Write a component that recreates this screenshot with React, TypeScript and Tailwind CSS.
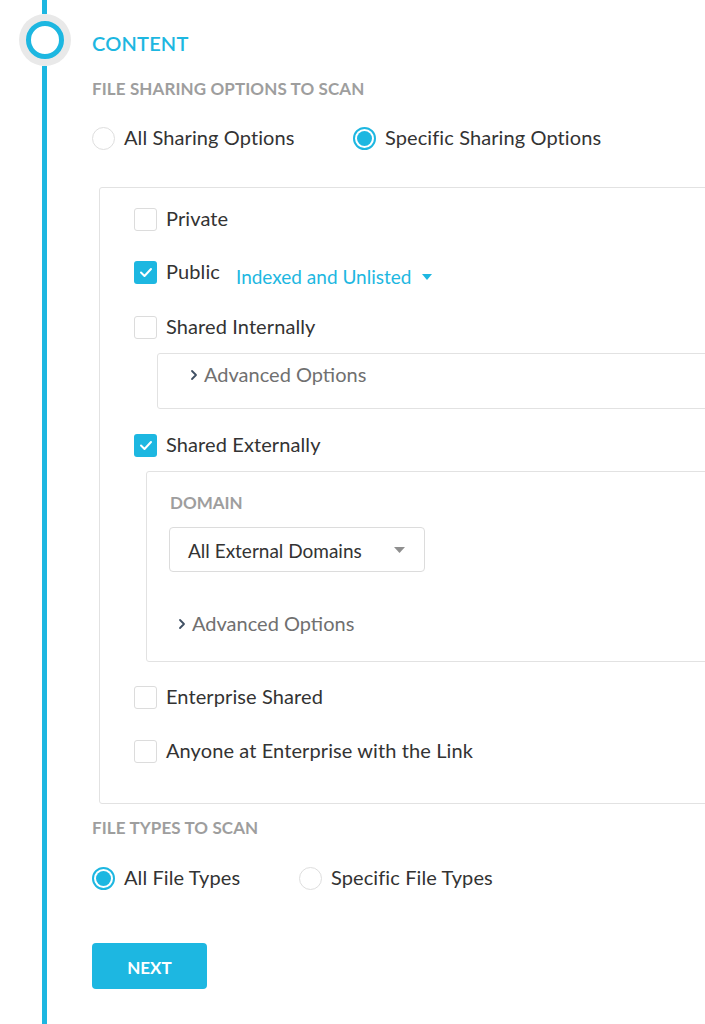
import React from "react";

const BLUE = "#1db7e1";

function Checkbox({ checked }: { checked?: boolean }) {
  if (checked) {
    return (
      <div className="w-[23px] h-[23px] rounded-[3px] bg-[#1db7e1] flex items-center justify-center shrink-0">
        <svg width="14" height="11" viewBox="0 0 14 11" fill="none">
          <path d="M2 5.5 L5.5 9 L12 2" stroke="white" strokeWidth="2" strokeLinecap="round" strokeLinejoin="round" />
        </svg>
      </div>
    );
  }
  return <div className="w-[23px] h-[23px] rounded-[3px] border border-[#dcdcdc] bg-white shrink-0" />;
}

function Radio({ checked }: { checked?: boolean }) {
  if (checked) {
    return (
      <div className="w-[23px] h-[23px] rounded-full border-2 border-[#1db7e1] flex items-center justify-center shrink-0">
        <div className="w-[15px] h-[15px] rounded-full bg-[#1db7e1]" />
      </div>
    );
  }
  return <div className="w-[23px] h-[23px] rounded-full border-[1.5px] border-[#dedede] bg-white shrink-0" />;
}

function CheckRow({ checked, label, className = "", children }: { checked?: boolean; label: string; className?: string; children?: React.ReactNode }) {
  return (
    <div className={`flex items-center h-[30px] ${className}`}>
      <Checkbox checked={checked} />
      <span className="ml-[9px] mb-[2px] text-[20px] tracking-[0.1px] text-[#333333]">{label}</span>
      {children}
    </div>
  );
}

function Chevron() {
  return (
    <svg width="8" height="12" viewBox="0 0 8 12" fill="none" className="shrink-0">
      <path d="M2 2 L6 6 L2 10" stroke="#3f4f63" strokeWidth="1.8" strokeLinecap="round" strokeLinejoin="round" />
    </svg>
  );
}

function AdvancedOptions() {
  return (
    <div className="flex items-center h-[30px]">
      <Chevron />
      <span className="ml-[6px] mb-[2px] text-[20px] text-[#707070]">Advanced Options</span>
    </div>
  );
}

export default function App() {
  return (
    <div
      className="w-[705px] h-[1024px] overflow-hidden bg-white flex"
      style={{ fontFamily: "Lato, 'Open Sans', sans-serif" }}
    >
      {/* rail */}
      <div className="w-[89px] shrink-0 flex flex-col items-center">
        <div className="w-[5px] h-[14px] bg-[#1db7e1]" />
        <div className="w-[52px] h-[52px] rounded-full bg-[#e9e9e9] flex items-center justify-center shrink-0">
          <div className="w-[38px] h-[38px] rounded-full border-[5px] border-[#1db7e1] bg-white" />
        </div>
        <div className="w-[5px] flex-1 bg-[#1db7e1]" />
      </div>

      {/* content */}
      <div className="flex-1 pl-[3px] pt-[31px] flex flex-col">
        <div className="text-[20px] leading-[24px] font-semibold text-[#1db7e1] tracking-[0.2px]">CONTENT</div>

        <div className="mt-[24px] text-[17px] leading-[20px] font-bold text-[#9e9e9e] tracking-[0.1px]">FILE SHARING OPTIONS TO SCAN</div>

        <div className="mt-[24px] flex items-center h-[30px]">
          <div className="flex items-center w-[261px]">
            <Radio />
            <span className="ml-[9px] mb-[2px] text-[20px] tracking-[0.1px] text-[#333333]">All Sharing Options</span>
          </div>
          <div className="flex items-center">
            <Radio checked />
            <span className="ml-[9px] mb-[2px] text-[20px] tracking-[0.1px] text-[#333333]">Specific Sharing Options</span>
          </div>
        </div>

        {/* sharing box */}
        <div className="mt-[34px] ml-[7px] w-[640px] border border-[#e2e2e2] rounded-[3px] pl-[34px] pt-[16px] pb-[37px] flex flex-col">
          <CheckRow label="Private" />
          <CheckRow checked label="Public" className="mt-[23px]">
            <span className="ml-[16px] mt-[10px] text-[19px] text-[#1db7e1] flex items-center">
              Indexed and Unlisted
              <svg width="10" height="6" viewBox="0 0 10 6" className="ml-[11px]">
                <path d="M0 0 L10 0 L5 6 Z" fill={BLUE} />
              </svg>
            </span>
          </CheckRow>
          <CheckRow label="Shared Internally" className="mt-[25px]" />

          <div className="mt-[11px] ml-[23px] border border-[#e2e2e2] rounded-[3px] pl-[32px] pt-[6px] pb-[18px]">
            <AdvancedOptions />
          </div>

          <CheckRow checked label="Shared Externally" className="mt-[21px]" />

          <div className="mt-[11px] ml-[12px] border border-[#e2e2e2] rounded-[3px] pt-[21px] pb-[22px] flex flex-col">
            <div className="pl-[23px] text-[17px] leading-[20px] font-bold text-[#9e9e9e]">DOMAIN</div>
            <div className="mt-[14px] ml-[22px] w-[256px] h-[45px] border border-[#dcdcdc] rounded-[4px] flex items-center justify-between pl-[18px] pr-[19px]">
              <span className="mt-[3px] text-[19px] text-[#333333]">All External Domains</span>
              <svg width="11" height="6" viewBox="0 0 11 6">
                <path d="M0 0 L11 0 L5.5 6 Z" fill="#8f8f8f" />
              </svg>
            </div>
            <div className="mt-[37px] ml-[31px]">
              <AdvancedOptions />
            </div>
          </div>

          <CheckRow label="Enterprise Shared" className="mt-[20px]" />
          <CheckRow label="Anyone at Enterprise with the Link" className="mt-[24px]" />
        </div>

        <div className="mt-[14px] text-[17px] leading-[20px] font-bold text-[#9e9e9e] tracking-[0.1px]">FILE TYPES TO SCAN</div>

        <div className="mt-[25px] flex items-center h-[30px]">
          <div className="flex items-center w-[207px]">
            <Radio checked />
            <span className="ml-[9px] mb-[2px] text-[20px] tracking-[0.1px] text-[#333333]">All File Types</span>
          </div>
          <div className="flex items-center">
            <Radio />
            <span className="ml-[9px] mb-[2px] text-[20px] tracking-[0.1px] text-[#333333]">Specific File Types</span>
          </div>
        </div>

        <button className="mt-[50px] w-[115px] h-[46px] rounded-[4px] bg-[#1db7e1] text-white font-bold text-[17px] pt-[3px] flex items-center justify-center">
          NEXT
        </button>
      </div>
    </div>
  );
}
